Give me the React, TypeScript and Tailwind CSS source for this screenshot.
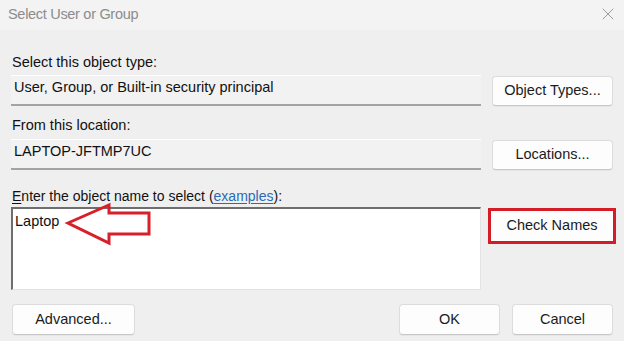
import { X } from "lucide-react";

function WinButton({ label, className = "" }: { label: string; className?: string }) {
  return (
    <button
      className={`h-[30px] rounded-[4px] border border-[#dcdcdc] border-b-[#c8c8c8] bg-[#fdfdfd] text-[14.5px] text-[#1b1b1b] shadow-[0_1px_0_rgba(0,0,0,0.04)] ${className}`}
    >
      {label}
    </button>
  );
}

function ReadField({ value }: { value: string }) {
  return (
    <div className="h-[31px] w-[470px] border-t border-t-white border-b-2 border-b-[#a3a3a3] bg-[#f2f2f2] pl-[3px] pt-[2px] text-[14.5px] leading-[18px] text-[#111]">
      {value}
    </div>
  );
}

export default function App() {
  return (
    <div
      className="relative h-[341px] w-[624px] overflow-hidden bg-[#efefef]"
      style={{ fontFamily: '"Liberation Sans", Arial, sans-serif' }}
    >
      {/* Title bar */}
      <div className="flex h-[30px] items-center justify-between bg-[#f3f3f3] pl-[8px] pr-[6px]">
        <span className="text-[14.5px] tracking-[-0.3px] text-[#8c8c8c]">Select User or Group</span>
        <X size={20} strokeWidth={1} className="mt-[-3px] text-[#8a8a8a]" />
      </div>

      <div className="flex flex-col pl-[11px] pr-[11px]">
        <div className="mt-[23px] h-[18px] pl-[1px] text-[14.5px] leading-[18px] text-[#111]">
          Select this object type:
        </div>
        <div className="mt-[4px] flex items-center gap-[11px]">
          <ReadField value="User, Group, or Built-in security principal" />
          <WinButton label="Object Types..." className="w-[121px]" />
        </div>

        <div className="mt-[10px] h-[18px] pl-[1px] text-[14.5px] leading-[18px] text-[#111]">
          From this location:
        </div>
        <div className="mt-[5px] flex items-center gap-[11px]">
          <ReadField value="LAPTOP-JFTMP7UC" />
          <WinButton label="Locations..." className="w-[121px]" />
        </div>

        <div className="mt-[17px] h-[18px] pl-[1px] text-[14px] leading-[18px] text-[#111]">
          <span className="underline underline-offset-2">E</span>nter the object name to select (
          <span className="text-[#2a6ab8] underline underline-offset-2">examples</span>):
        </div>
        <div className="mt-[2px] flex items-start gap-[7px]">
          <div className="h-[83px] w-[470px] shrink-0 border-l-2 border-t-2 border-l-[#6e6e6e] border-t-[#6e6e6e] border-r border-b border-r-[#e3e3e3] border-b-[#e3e3e3] bg-white pl-[2px] pt-[3px] text-[14.5px] leading-[18px] text-[#111]">
            Laptop
          </div>
          <div className="mt-[1px] border-[3px] border-[#d51d27]">
            <WinButton label="Check Names" className="w-[122px] rounded-none border-0 h-[27px]" />
          </div>
        </div>

        <div className="mt-[14px] flex items-center">
          <WinButton label="Advanced..." className="ml-[1px] w-[123px] h-[31px]" />
          <div className="flex-1" />
          <WinButton label="OK" className="w-[101px] h-[31px]" />
          <WinButton label="Cancel" className="ml-[12px] w-[101px] h-[31px]" />
        </div>
      </div>

      {/* Red annotation arrow */}
      <svg className="absolute left-0 top-0" width="624" height="341" viewBox="0 0 624 341" fill="none">
        <polygon
          points="68,223 109,205 109,213 149,213 149,234 109,234 109,243"
          stroke="#d8202a"
          strokeWidth="3"
          strokeLinejoin="miter"
        />
      </svg>
    </div>
  );
}
